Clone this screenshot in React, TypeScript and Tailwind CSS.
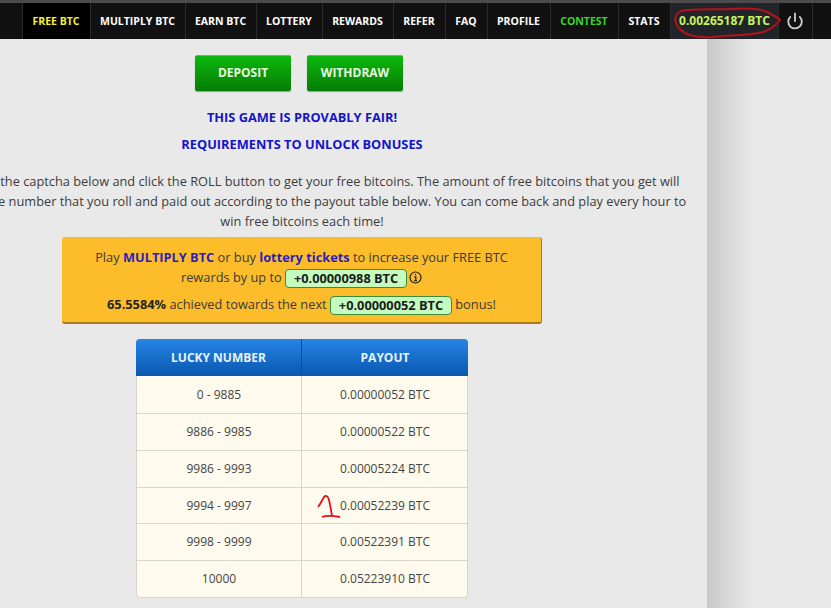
import { Power } from "lucide-react";

const navItems = [
  { label: "FREE BTC", width: "w-[68px]", color: "text-[#f2f23a]", bg: "bg-black" },
  { label: "MULTIPLY BTC", width: "w-[95px]", color: "text-white", bg: "" },
  { label: "EARN BTC", width: "w-[71px]", color: "text-white", bg: "" },
  { label: "LOTTERY", width: "w-[66px]", color: "text-white", bg: "" },
  { label: "REWARDS", width: "w-[71px]", color: "text-white", bg: "" },
  { label: "REFER", width: "w-[52px]", color: "text-white", bg: "" },
  { label: "FAQ", width: "w-[42px]", color: "text-white", bg: "" },
  { label: "PROFILE", width: "w-[63px]", color: "text-white", bg: "" },
  { label: "CONTEST", width: "w-[68px]", color: "text-[#39d62f]", bg: "" },
  { label: "STATS", width: "w-[52px]", color: "text-white", bg: "" },
];

const payouts = [
  { range: "0 - 9885", payout: "0.00000052 BTC", height: "h-[37px]" },
  { range: "9886 - 9985", payout: "0.00000522 BTC", height: "h-[37px]" },
  { range: "9986 - 9993", payout: "0.00005224 BTC", height: "h-[37px]" },
  { range: "9994 - 9997", payout: "0.00052239 BTC", height: "h-[36px]" },
  { range: "9998 - 9999", payout: "0.00522391 BTC", height: "h-[37px]" },
  { range: "10000", payout: "0.05223910 BTC", height: "h-[37px]" },
];

function NavBar() {
  return (
    <div className="h-[39px] border-t-[3px] border-[#4b4b4b] bg-[#111111] flex text-[10.5px] font-bold">
      <div className="w-[22px]" />
      {navItems.map((item) => (
        <div
          key={item.label}
          className={`${item.width} ${item.color} ${item.bg} border-l border-[#2c2c2c] pt-[2px] pr-px flex items-center justify-center whitespace-nowrap`}
        >
          {item.label}
        </div>
      ))}
      <div className="relative w-[108px] bg-[#21252a] border-l border-[#2c2c2c] pb-px flex items-center justify-center text-[12px] text-[#c6f25a] whitespace-nowrap">
        0.00265187 BTC
        <svg className="absolute left-[2px] top-[2px]" width="108" height="36" viewBox="0 0 108 36" fill="none">
          <path
            d="M8 6C22 3 40 5 58 4C72 3 88 3 96 8C100 10 106 14 107 15C104 19 100 24 90 27C74 31 56 30 40 32C26 33 14 31 8 25C2 20 -1 11 8 6Z"
            stroke="#b5121b"
            strokeWidth="2"
          />
        </svg>
      </div>
      <div className="w-[35px] border-x border-[#2c2c2c] pr-[2px] flex items-center justify-center text-[#cfcfcf]">
        <Power size={18} strokeWidth={2.4} />
      </div>
    </div>
  );
}

function ActionButton({ label }: { label: string }) {
  return (
    <div className="w-[96px] h-[36px] pb-[2px] rounded-[2px] bg-gradient-to-b from-[#0cb80c] to-[#067d06] border-t border-[#3fd23f] shadow-[0_1px_1px_rgba(0,0,0,0.35)] flex items-center justify-center text-[12px] font-bold text-[#e8f8e0]">
      {label}
    </div>
  );
}

function BonusPill({ children }: { children: string }) {
  return (
    <span className="inline-block w-[122px] h-[19px] leading-[17px] rounded-[4px] border border-[#3d8a3a] bg-[#c4fbbf] text-center font-bold text-[#1c1c1c] align-middle">
      {children}
    </span>
  );
}

function BonusBox() {
  return (
    <div className="mt-[6px] w-[480px] h-[87px] rounded-[3px] bg-[#fdbd2b] border-b-2 border-r border-[#a9791c] pt-[10px] text-center text-[12.8px] leading-[20px] text-[#3a3a3a]">
      <p>
        Play <b className="text-[#2c1fb8]">MULTIPLY BTC</b> or buy <b className="text-[#2c1fb8]">lottery tickets</b> to increase your FREE BTC
      </p>
      <p>
        rewards by up to <BonusPill>+0.00000988 BTC</BonusPill>
        <svg className="inline-block align-[-2px] ml-[2px]" width="13" height="13" viewBox="0 0 13 13" fill="none">
          <circle cx="6.5" cy="6.5" r="5.5" stroke="#222" strokeWidth="1.2" />
          <path d="M6.5 3V4.3M5.3 5.8H6.8V9.6M5.2 9.7H8" stroke="#222" strokeWidth="1.2" />
        </svg>
      </p>
      <p className="mt-[6px]">
        <b className="text-[#252525]">65.5584%</b> achieved towards the next <BonusPill>+0.00000052 BTC</BonusPill> bonus!
      </p>
    </div>
  );
}

function PayoutTable() {
  return (
    <div className="mt-[15px] w-[332px] rounded-[4px] border-x border-b border-[#d5d5cd] bg-[#fefbee] text-[12px] text-[#444444]">
      <div className="h-[37px] -mx-px rounded-t-[4px] bg-gradient-to-b from-[#2585e6] to-[#0a57ae] flex items-center text-[12px] font-bold text-[#e8f2fb]">
        <div className="w-[166px] h-full flex items-center justify-center border-r border-[#0b4c96]">LUCKY NUMBER</div>
        <div className="flex-1 text-center">PAYOUT</div>
      </div>
      {payouts.map((row, index) => (
        <div key={row.range} className={`${row.height} flex ${index > 0 ? "border-t border-[#d8d6ca]" : ""}`}>
          <div className="w-[165px] flex items-center justify-center border-r border-[#d8d6ca]">{row.range}</div>
          <div className="relative flex-1 pl-px flex items-center justify-center">
            {row.payout}
            {row.range === "9994 - 9997" ? (
              <svg className="absolute left-[15px] top-[6px]" width="26" height="26" viewBox="0 0 26 26" fill="none">
                <path d="M1 13C3 11 5 6 7 3C9 1 11 2 12 6C13 10 14 16 15 22M5 23C10 21 17 22 23 23" stroke="#e0141c" strokeWidth="1.8" />
              </svg>
            ) : null}
          </div>
        </div>
      ))}
    </div>
  );
}

export default function App() {
  return (
    <div className="w-[831px] h-[608px] overflow-hidden bg-[#e9e9e9] font-['Open_Sans',sans-serif]">
      <NavBar />
      <div className="flex h-[569px]">
        <main className="w-[707px] shrink-0 overflow-hidden">
          <div className="w-[800px] ml-[-98px] flex flex-col items-center pt-[16px]">
            <div className="flex gap-[16px] mr-[6px]">
              <ActionButton label="DEPOSIT" />
              <ActionButton label="WITHDRAW" />
            </div>
            <p className="mt-[16px] leading-[20px] text-[12.8px] font-bold text-[#1414c8]">THIS GAME IS PROVABLY FAIR!</p>
            <p className="mt-[7px] leading-[20px] text-[12.8px] font-bold text-[#1414c8]">REQUIREMENTS TO UNLOCK BONUSES</p>
            <div className="mt-[17px] w-full text-center text-[12.8px] leading-[20px] text-[#3c3c3c]">
              <p className="whitespace-nowrap">Please solve the captcha below and click the ROLL button to get your free bitcoins. The amount of free bitcoins that you get will</p>
              <p className="whitespace-nowrap">depend on the number that you roll and paid out according to the payout table below. You can come back and play every hour to</p>
              <p>win free bitcoins each time!</p>
            </div>
            <BonusBox />
            <PayoutTable />
          </div>
        </main>
        <div className="w-[45px] bg-gradient-to-r from-[#c9c9c9] to-[#e9e9e9]" />
      </div>
    </div>
  );
}
